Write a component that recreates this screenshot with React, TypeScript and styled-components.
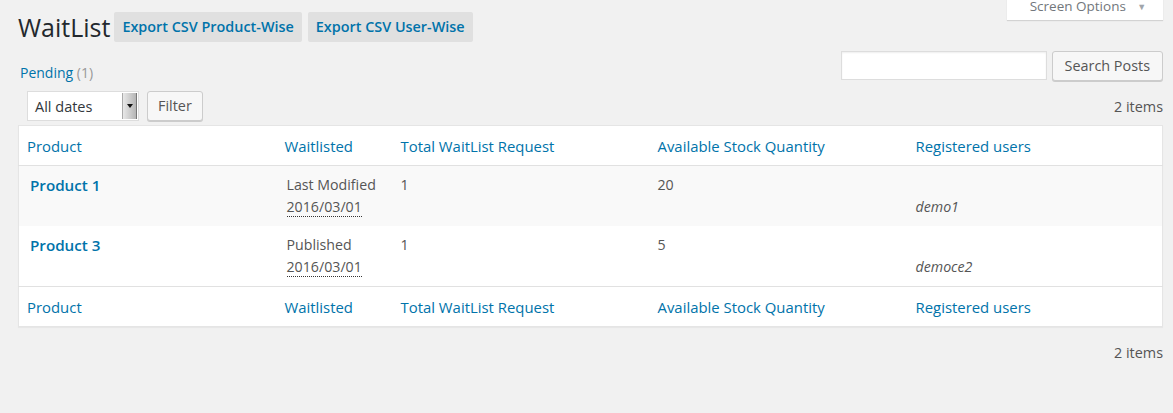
import styled, { createGlobalStyle } from "styled-components";

const GlobalStyle = createGlobalStyle`
  html, body {
    margin: 0;
    background: #f1f1f1;
  }
  body {
    font-family: "Open Sans", "Noto Sans", sans-serif;
    font-size: 14px;
    color: #555;
  }
`;

const rows = [
  { name: "Product 1", status: "Last Modified", date: "2016/03/01", total: "1", stock: "20", user: "demo1" },
  { name: "Product 3", status: "Published", date: "2016/03/01", total: "1", stock: "5", user: "democe2" },
];

const columns = ["Product", "Waitlisted", "Total WaitList Request", "Available Stock Quantity", "Registered users"];

const App = () => {
  return (
    <>
      <GlobalStyle />
      <StyledWrap>
        <StyledHeader>
          <StyledTitleGroup>
            <h1>WaitList</h1>
            <PageButton>Export CSV Product-Wise</PageButton>
            <PageButton>Export CSV User-Wise</PageButton>
          </StyledTitleGroup>
          <ScreenTab>
            Screen Options <span className="caret">▼</span>
          </ScreenTab>
        </StyledHeader>

        <StyledSubRow>
          <StyledViews>
            <a>Pending</a> <span className="count">(1)</span>
          </StyledViews>
          <StyledSearch>
            <input type="text" />
            <Button $wide>Search Posts</Button>
          </StyledSearch>
        </StyledSubRow>

        <TableNav>
          <StyledActions>
            <SelectBox>
              <span>All dates</span>
              <span className="arrow" />
            </SelectBox>
            <Button>Filter</Button>
          </StyledActions>
          <span>2 items</span>
        </TableNav>

        <StyledTable>
          <colgroup>
            <col style={{ width: 258 }} />
            <col style={{ width: 116 }} />
            <col style={{ width: 257 }} />
            <col style={{ width: 258 }} />
            <col />
          </colgroup>
          <thead>
            <tr>
              {columns.map((c) => (
                <th key={c}>{c}</th>
              ))}
            </tr>
          </thead>
          <tbody>
            {rows.map((r, i) => (
              <StyledRow key={r.name} $alt={i % 2 === 0}>
                <td className="title">
                  <strong>{r.name}</strong>
                </td>
                <td className="status">
                  {r.status}
                  <br />
                  <abbr>{r.date}</abbr>
                </td>
                <td>{r.total}</td>
                <td>{r.stock}</td>
                <td>
                  <br />
                  <em>{r.user}</em>
                </td>
              </StyledRow>
            ))}
          </tbody>
          <tfoot>
            <tr>
              {columns.map((c) => (
                <th key={c}>{c}</th>
              ))}
            </tr>
          </tfoot>
        </StyledTable>

        <TableNav $bottom>
          <span />
          <span>2 items</span>
        </TableNav>
      </StyledWrap>
    </>
  );
};

export default App;

const StyledWrap = styled.div`
  padding: 0 10px 0 18px;
`;

const StyledHeader = styled.div`
  display: flex;
  justify-content: space-between;
  align-items: flex-start;
`;

const StyledTitleGroup = styled.div`
  display: flex;
  align-items: center;
  gap: 6px;
  margin-top: 12px;

  h1 {
    margin: 0 -2px 0 0;
    font-size: 25px;
    font-weight: 400;
    color: #23282d;
    line-height: 30px;
  }
`;

const PageButton = styled.span`
  display: inline-block;
  height: 30px;
  line-height: 30px;
  padding: 0 8px;
  background: #e0e0e0;
  border-radius: 2px;
  color: #0073aa;
  font-size: 14.4px;
  font-weight: 600;
  white-space: nowrap;
`;

const ScreenTab = styled.div`
  margin-top: -8px;
  height: 28px;
  line-height: 28px;
  width: 156px;
  box-sizing: border-box;
  text-align: center;
  padding-left: 6px;
  background: #fff;
  color: #72777c;
  font-size: 13.5px;
  box-shadow: 0 1px 1px rgba(0, 0, 0, 0.12);

  .caret {
    font-size: 9px;
    color: #a0a5aa;
    margin-left: 8px;
    vertical-align: 1px;
  }
`;

const StyledSubRow = styled.div`
  display: flex;
  justify-content: space-between;
  margin-top: 9px;
`;

const StyledViews = styled.div`
  margin-top: 12px;
  margin-left: 2px;
  line-height: 20px;
  font-size: 14px;

  a {
    color: #0073aa;
  }
  .count {
    color: #999;
  }
`;

const StyledSearch = styled.div`
  display: flex;
  gap: 5px;

  input {
    width: 206px;
    height: 29px;
    box-sizing: border-box;
    border: 1px solid #ddd;
    background: #fff;
    box-shadow: inset 0 1px 2px rgba(0, 0, 0, 0.07);
    margin: 0;
    outline: none;
  }
`;

const Button = styled.button<{ $wide?: boolean }>`
  height: 30px;
  box-sizing: border-box;
  padding: 0 ${(p) => (p.$wide ? "12px" : "10px")};
  margin: 0;
  border: 1px solid #ccc;
  border-radius: 3px;
  background: #f7f7f7;
  box-shadow: 0 1px 0 #ccc;
  color: #555;
  font-family: "Open Sans", "Noto Sans", sans-serif;
  font-size: 14.4px;
  line-height: 28px;
`;

const TableNav = styled.div<{ $bottom?: boolean }>`
  display: flex;
  justify-content: space-between;
  align-items: center;
  height: 30px;
  margin: ${(p) => (p.$bottom ? "10px 0 0" : "8px 0 4px")};
  color: #555;
  font-size: 14.4px;
`;

const StyledActions = styled.div`
  display: flex;
  gap: 8px;
  padding-left: 9px;
`;

const SelectBox = styled.div`
  display: flex;
  align-items: center;
  justify-content: space-between;
  width: 112px;
  height: 30px;
  box-sizing: border-box;
  padding: 1px 1px 1px 7px;
  border: 1px solid #ddd;
  background: #fff;
  color: #32373c;
  font-size: 14.5px;

  .arrow {
    align-self: stretch;
    width: 13px;
    background: linear-gradient(to right, #e8e8e8, #b5b5b5);
    border-left: 1px solid #aaa;
    border-right: 1px solid #777;
    position: relative;
  }
  .arrow::after {
    content: "";
    position: absolute;
    left: 4px;
    top: 11px;
    border-left: 3px solid transparent;
    border-right: 3px solid transparent;
    border-top: 4px solid #111;
  }
`;

const StyledTable = styled.table`
  width: 100%;
  table-layout: fixed;
  border-collapse: collapse;
  border-spacing: 0;
  background: #fff;
  border: 1px solid #e5e5e5;
  box-shadow: 0 1px 1px rgba(0, 0, 0, 0.04);

  th {
    text-align: left;
    font-weight: 400;
    font-size: 14.9px;
    color: #0073aa;
    height: 40px;
    padding: 0 8px;
    box-sizing: border-box;
  }
  thead th {
    border-bottom: 1px solid #e1e1e1;
  }
  tfoot th {
    border-top: 1px solid #e1e1e1;
  }
`;

const StyledRow = styled.tr<{ $alt: boolean }>`
  background: ${(p) => (p.$alt ? "#f9f9f9" : "#fff")};

  td {
    vertical-align: top;
    height: 60px;
    box-sizing: border-box;
    padding: 8px 8px;
    line-height: 22px;
    font-size: 14.2px;
    color: #555;
  }
  td.title {
    padding-left: 11px;
  }
  td.status {
    padding-left: 10px;
  }
  td.title strong {
    color: #0073aa;
    font-size: 15.2px;
    font-weight: 600;
  }
  abbr {
    text-decoration: none;
    border-bottom: 1px dotted #333;
  }
  em {
    font-style: italic;
  }
`;
